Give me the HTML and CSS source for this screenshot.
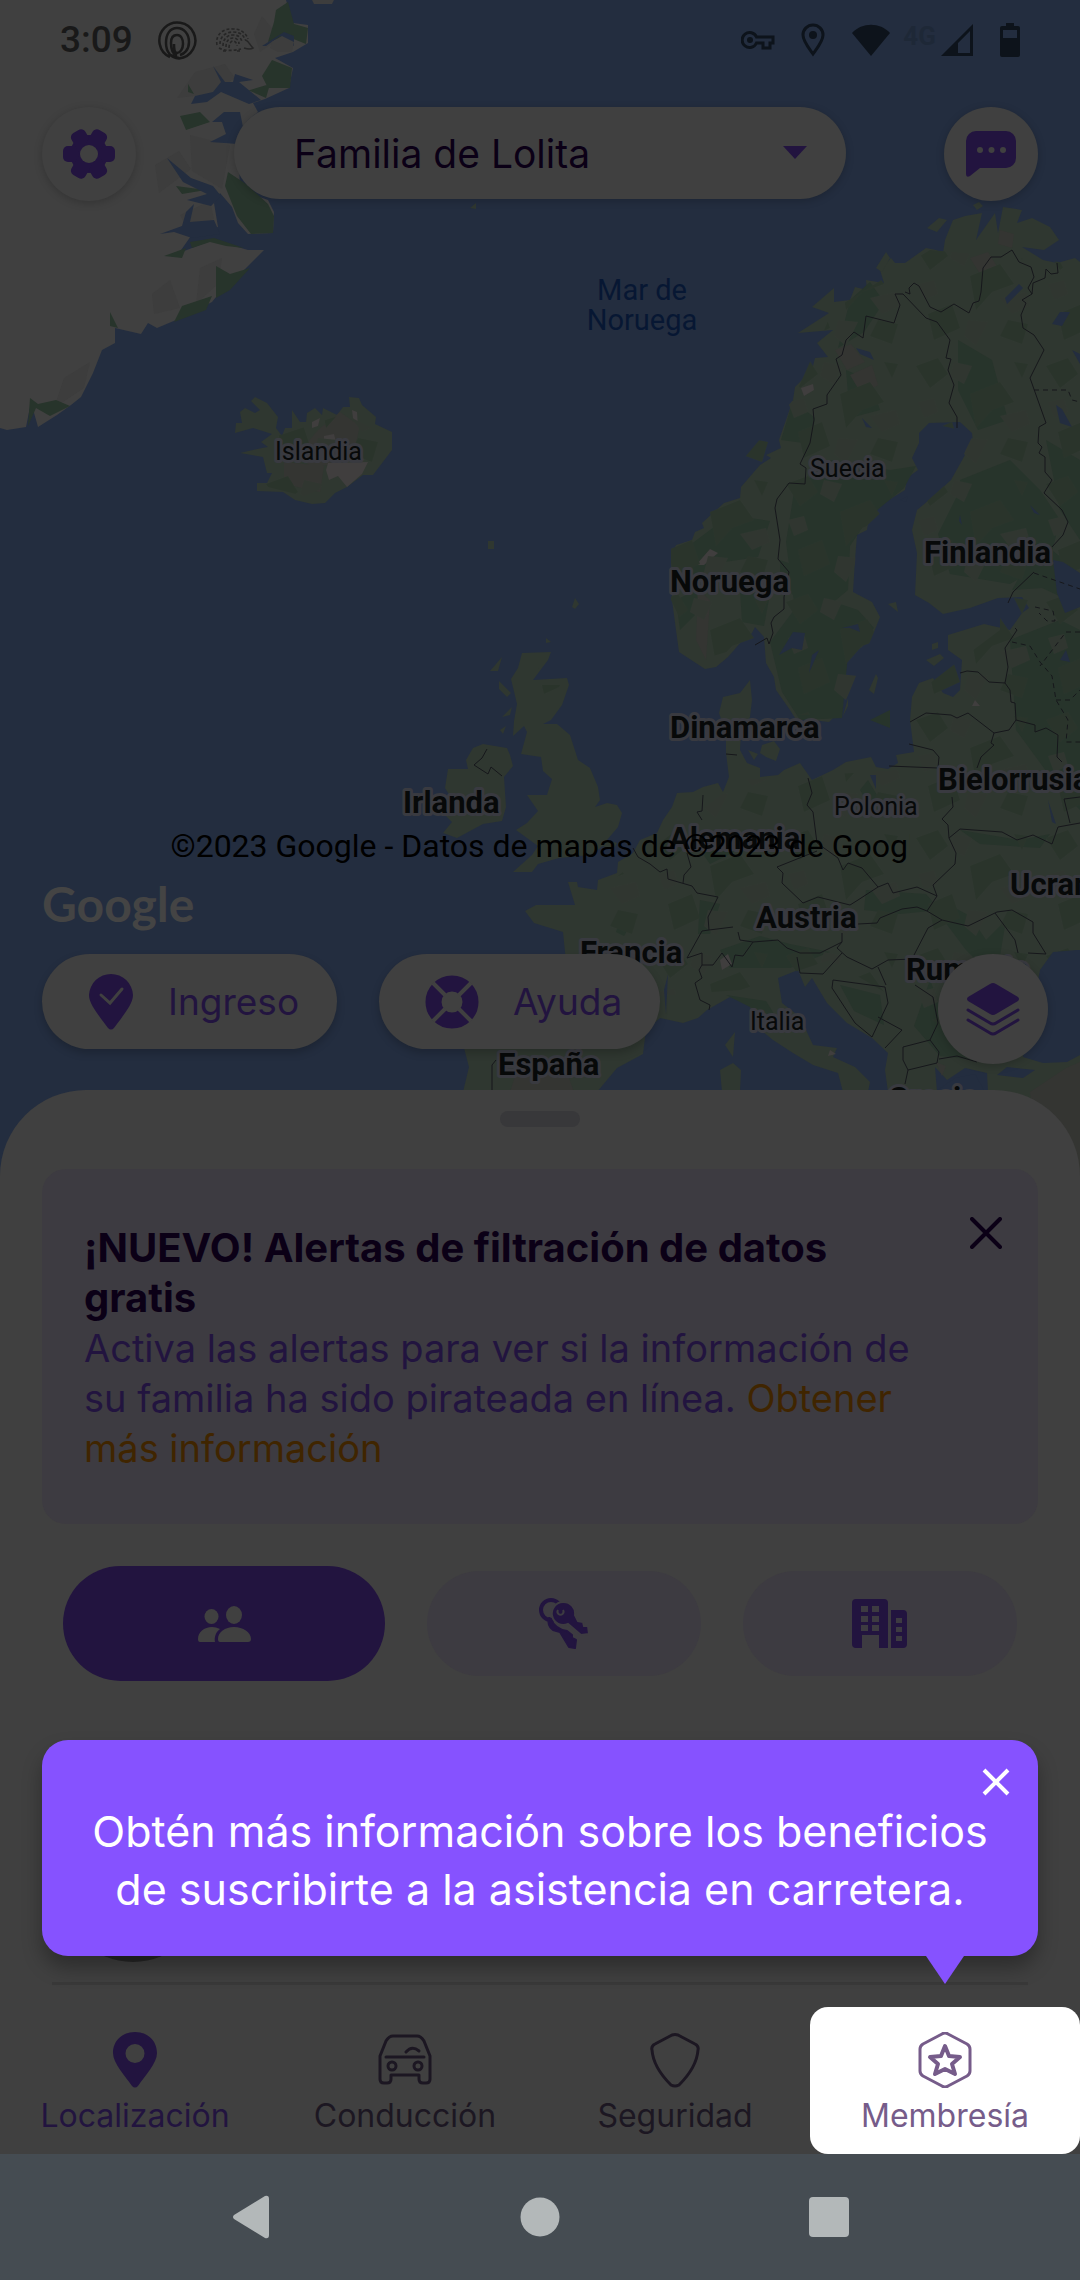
FILE: index.html
```html
<!DOCTYPE html>
<html lang="es">
<head>
<meta charset="utf-8">
<meta name="viewport" content="width=device-width, initial-scale=1">
<title>Familia de Lolita</title>
<link rel="stylesheet" href="styles.css">
</head>
<body>
<div class="screen">
  <main class="map">
    <svg class="map-canvas" viewBox="0 0 1080 1180" preserveAspectRatio="xMidYMin slice" aria-hidden="true">
      <defs>
        <pattern id="relief" width="130" height="118" patternUnits="userSpaceOnUse">
          <path class="relief-dark" d="M6 12l22-8 10 16-18 14zM60 40l30-12 14 20-22 8-16 18zM18 78l24-10 8 24-26 12zM98 84l20 4-6 20-22-8zM104 8l14 2-6 14z"/>
          <path class="relief-light" d="M44 8l18 4-8 18-14-8zM90 62l26-6 4 14-18 8zM58 84l20 2-12 24-12-10zM8 48l16-4 4 14-14 6z"/>
        </pattern>
      </defs>
      <rect class="sea" width="1080" height="1180"/>

      <!-- Greenland -->
      <path class="ice" d="M0 0H286L293 23 308 25 308 43 293 52 275 58 293 68 289 88 265 99 253 103 258 112 248 120 238 133 240 190 268 200 274 212 273 233 248 234 238 223 232 207 220 193 214 203 218 227 193 233 179 253 213 240 248 250 264 250 241 273 224 287 212 302 176 320 157 328 148 323 141 334 115 328 115 343 102 350 93 373 81 397 71 405 57 415 38 427 31 402 26 427 7 430 0 428Z"/>
      <path class="ice-shade" d="M262 16l18 22-20 14-6-18zM195 72l30-8 10 14-24 16-34 4zM155 165l24-14 12 18-32 24zM190 135l40 10-8 44-30-18zM152 294l18-14 10 28-26 6zM200 268l22-10-4 26-22 20zM64 378l26-16-6 26-30 20zM180 215l30-14 4 18-28 8z"/>
      <path class="woods" d="M276 10l12-8 6 22 14 4-2 16-20-8-18 6 6-20zM272 60l20 8-2 20-22 0-6-12zM228 172l18 12 22 20 6 12-1 17-22 1-14-18-12-30zM216 266l14 8 20-6-20 22-14 8zM182 306l30-10-6 14-32 12zM110 312l8 16-8-2zM190 242l24-4 30 10-18-2-16-4-18 6zM30 398l8 6 18-4 14 6-20 10-14-8-8 18zM180 116l20-4 10 10-24 8zM164 256l22-8-4 10zM188 84l6 10-6-2zM176 186l30 4-24 4zM250 90l20-6-4 14-18-8z"/>
      <path class="sea" d="M213 66l12 16 8 0 2-8 18 6-14 2 22 18-12 4-28-12-14 10-16 2 4-8 18-4 8-10zM167 158l24 20 22 8 8 10-10 10-24-6 20-6-24-12zM224 112l16 0 4 20-6 12-28-2 16-8-4-12-10 0zM262 46l22-14 10 4 0 10-14-10-14 10zM160 234l22-8 4-14 8-8-4 18 24-2 6 14-28 4-18-6z"/>
      <path class="ice-shade" d="M272 42l10-6 12 6-2 10-14 0-8-4zM312 0h22l-2 4-18 0z"/>

      <!-- Iceland -->
      <path class="land" d="M255 397L267 403 278 417 276 428 282 436 285 428 292 428 292 410 300 422 306 422 307 413 315 408 322 415 323 408 337 415 343 407 350 407 349 397 359 398 362 405 376 417 375 424 392 432 392 450 373 475 363 475 347 487 335 493 325 503 312 504 295 500 283 492 257 491 257 483 267 483 272 473 267 473 263 457 240 453 262 448 268 447 261 442 272 434 253 428 235 433 236 423 242 423 240 412 245 408 255 413 260 410 251 401Z"/>
      <path class="soil" d="M340 412l20 14-8 34-40 8-14-14 20-24zM284 462l40 4-4 26-36-8z"/>
      <path class="snow" d="M328 463l40-1-6 12-15 13-9-11-9 4-3-10zM312 422l8-4-2 8-6 2zM352 410l5 2 1 14-5-8zM324 436l10-2 2 8-12 0z"/>

      <!-- British Isles -->
      <path class="land" d="M522 653L551 652 548 660 533 680 567 678 569 685 562 705 551 720 543 724 557 724 570 735 578 760 590 768 598 787 600 800 595 807 607 803 617 805 622 813 618 827 607 840 617 843 613 850 603 846 590 855 559 858 538 864 532 872 513 872 532 855 538 846 516 830 527 823 538 811 527 795 547 795 552 779 543 771 541 757 521 754 527 732 524 726 513 736 514 721 517 704 511 679 518 668Z"/>
      <path class="land" d="M483 744L507 748 510 755 513 766 504 777 506 807 502 821 483 824 457 838 443 833 452 822 446 816 457 807 445 788 448 769 468 769 466 760 473 748ZM490 671l12-14-4 14zM499 681l12 12-4 4-8-8zM502 717l10-10-2 8zM500 730l6-4-3 8zM488 541h6v8h-6zM575 598l4 6-4 5-3-2zM546 638l5 4-5 1zM470 208l6-5v6z"/>

      <!-- Mainland Europe -->
      <path class="land" id="mainland" d="M705 669L679 652 676 630 672 600 671 557 676 545 692 540 695 532 704 528 702 523 724 503 740 498 741 487 760 465 771 458 766 455 781 448 779 440 793 400 795 387 812 370 815 358 828 357 817 343 833 330 798 333 829 313 812 307 834 288 834 302 850 300 855 287 867 290 866 280 884 283 880 270 891 258 895 263 905 263 919 253 926 248 936 250 943 253 945 240 953 220 965 216 982 213 976 240 995 213 998 233 1003 207 1022 210 1017 223 1032 218 1050 227 1059 240 1044 250 1022 247 1043 260 1057 263 1075 258 1080 262V1180H988L988 1092 987 1073 965 1068 947 1080 935 1067 937 1092 888 1092 885 1070 888 1053 872 1038 847 1023 827 1003 812 978 805 987 798 970 778 978 782 1003 800 1017 813 1045 837 1048 833 1057 855 1067 870 1082 868 1092 843 1092 838 1073 813 1065 793 1053 773 1040 752 1023 750 1005 730 997 707 1010 698 1018 683 1023 660 1018 646 1030 643 1054 617 1068 597 1092H463L469 1067 464 1048 470 1035 560 1030 570 1000 565 952 563 932 534 923 525 911 536 905 575 905 568 882 577 882 578 887 597 890 598 880 617 873 618 862 633 853 640 840 657 833 663 820 672 807 677 793 693 792 703 787 718 783 723 792 729 777 726 753 726 733 719 713 723 697 740 693 750 680 752 700 750 717 741 733 740 750 747 763 760 768 760 777 778 775 784 770 800 763 812 780 833 770 846 762 871 757 876 767 888 769 898 763 896 755 914 752 910 720 912 697 919 683 933 678 943 693 953 697 960 690 962 660 948 650 948 635 984 624 1010 630 1022 613 1029 608 1022 597 998 598 970 608 943 614 929 603 915 595 917 553 912 530 917 510 929 500 951 480 965 455 974 453 972 433 960 422 929 423 919 433 919 443 912 458 918 470 907 478 905 490 884 503 869 518 867 530 857 535 855 560 853 592 872 602 880 617 874 632 862 647 848 655 845 677 841 710 829 722 795 718 790 710 776 690 774 677 766 663 764 637 755 627 752 633 741 642 728 657 716 667Z"/>
      <path class="land" d="M762 745l12-4 6 8-4 12-10-4-6-4zM748 750l10 4-4 6zM869 690l7-16 2 4-4 16zM843 716l5-18 0 8zM926 660l14-6 4 4-10 8zM932 644l6-2v6l-6 2zM888 604l8-2 2 10zM735 1032l-2 25-8-12zM720 1070l13-7 8 7-1 22h-18zM927 228l12-10 8 2-10 12zM973 205l6-3 4 4-6 4zM876 268l10-16 4 6-8 14z"/>
      <g class="woods">
        <path d="M793 400l22 18-4 26-30-4zM830 460l60 10 26-4-12 22-34 28-20 30-2 44-24 20-30-8-8-60 8-50zM780 560l28 10 20 30 30 10 16 18-26 26-6 64-42 2-18-28-12-50 30-40-20-20zM960 480l50-20 30 30 20 30-10 40-40 24-60-10-12-40 12-24 10-20zM850 300l20-18 14 20-20 30-26 16zM846 370l24 10 10 30-30 8zM958 340l34 20 16 60-30 10-20-40zM690 545l40-30 40 6-12 36-40 6-36 24zM676 600l20-10 4 20-20 20zM740 590l30 4-6 32-22-4z"/>
        <path d="M1040 540l24 20 4 40-26-12-30 2zM1046 440l34 20v80l-20-30zM1010 640l50-20 20 10v180l-20-20-44-60-4-60zM960 830l60 10 30-6-10 14-60-4zM866 890l60 4 14 16-40 4-36-4zM940 900l30 16 16 24 20-20-10 60-30-30-30-40zM720 950l40-14 30 8 40 8-40 16-60 0zM840 985l40 10 4 30-30-14zM930 980l20 50 50 20 0 12-60-6-26-30zM868 780l12 20-8 10-12-20zM700 900l20 4-10 30-12 0zM726 995l40 6 10 16-22-8zM700 850l40-14 10 8-40 20zM620 920l10 6-6 10-8-4zM870 720l20-10 0 18z"/>
      </g>
      <g class="soil">
        <path d="M835 350l16-6 14 18-18 8zM850 375l22-10 6 20-16 10zM970 258l18-6 10 16-14 12zM1000 230l14 4-2 14-14-4zM698 590l12 10-4 60-10-20z"/>
        <path d="M1066 1068l14-6v118l-46-60-4-28zM520 1060l44 4 10 28h-64zM936 1062l10 4-4 10z"/>
      </g>
      <path class="snow" d="M801 388l12-4 1 6-10 6zM696 565l14-16 8 4-14 12zM720 960l8-6 4 10-10 6zM830 1050l6 4-8 2zM975 700l5 6-8 0z"/>
      <path fill="url(#relief)" d="M671 600V545L793 400 833 310 930 250 1060 262 1080 300V1060L1000 1060 830 960 740 990 600 1000 600 890 740 780 900 770 914 752 912 697 960 660 1000 630 1000 600 917 590 917 510 951 480 974 433 929 423 905 490 857 535 853 592 874 632 840 715 795 715 766 640 700 660Z"/>
      <path fill="url(#relief)" d="M262 440l22-6 60-20 40 20 0 20-40 26-40 16-40-10zM520 665l20 0-10 20 30 0-10 24-30 10-4-30z"/>

      <!-- Lakes and inland seas -->
      <path class="sea" d="M793 632l12 1-3 17-10-2-13 7zM819 650l-10 23 3-18zM842 628l16-4 2 8-10-4zM1053 560l10 2 17 11v34l-15 6-8-20zM1005 298l14-14 4 4-16 16zM1052 324l8-12 10 0-8 14zM856 348l14 4 4 8-14-6zM862 418l10 10-6-1zM1056 405l6 4 10 18-12-4zM1072 350l8 4v10zM1060 660l6-10 4 12zM1040 970L1053 952 1077 950 1080 950V1055L1067 1062 1043 1063 1023 1057ZM997 1075L1007 1067 1035 1070 1023 1078ZM1048 800l8 24-4-2zM870 775l6 0 0 14zM935 1092h50l-10-18-20 4zM668 974l-2 40-2-24zM900 500l8-4-2 6zM1030 505l10 10-6-2zM960 515l2 10-3-4z"/>

      <g class="border">
        <path d="M755 645L767 638 769 644 773 633 771 623 774 617 784 609 784 597 789 572 778 559 780 540 775 508 777 499 789 483 805 484 806 468 800 464 810 443 814 420 813 409 827 404 827 395 841 375 836 359 842 355 846 340 854 332 863 338 866 316 894 323 900 305 895 294 903 294 926 318 937 322 950 340 946 358 951 359 948 370 954 385 949 403 957 417 957 428"/>
        <path d="M905 292L910 294 909 288 914 283 919 286 930 307 941 312 954 304 969 313 973 303 979 301 981 292 983 268 991 257 1001 257 1012 250 1019 262 1031 267 1034 277 1028 288 1032 294 1022 300 1026 303 1021 315 1023 328 1034 335 1044 350 1030 378 1046 423 1039 427 1038 443 1042 447 1039 453 1045 457 1045 472 1052 480 1044 493 1062 510 1068 522 1063 535 1052 547M1034 572L1013 592 1008 603M1032 294L1033 283 1045 278 1046 269 1051 274 1058 273 1057 263"/>
        <path d="M1015 628L1017 630 1005 648 1008 667 1005 683 1010 690 1011 702 1015 703 1016 720 1035 725 1035 732 1046 728 1058 735 1057 757 1062 762M960 673L967 671 978 672 989 682 1005 683M910 722L926 713 951 715 957 718 968 713 994 733 1009 730 1016 720M994 733L991 743 994 745 981 757 977 768M909 744L933 750 939 757 938 768 889 766M726 754l11 1"/>
        <path d="M703 795L702 811 697 812 702 820M633 848L638 857 650 864 660 872 667 869 668 879 692 886 697 893 718 897 708 917 709 930 702 931 687 958 702 953 702 965 713 965 722 953 732 967 735 955 743 956 753 942 740 940 738 932M687 853L691 867 684 875 683 883M709 930L733 927M753 942L778 940 787 948 800 953 820 953 842 942 842 933M702 965L699 970 702 978 695 983 700 1000 710 1005 709 1010"/>
        <path d="M808 778L812 793 807 805 813 812 817 843 838 858 843 870 848 863 862 868 878 887 888 883 893 893 917 887 937 896 927 911M777 867L817 851M777 867L783 873 782 883 803 903 818 897 838 902 850 905 858 900 878 887M952 797L953 807 942 819 948 825 949 838 956 853 955 864 933 885 937 896M949 838L960 829 1002 832 1017 840 1033 835 1052 844 1058 827 1080 823M1080 797l-16 2 6 24"/>
        <path d="M858 924L877 923 880 918 902 909 917 907 927 911 942 920 928 928 913 957M942 920L968 926 997 912 1012 910 1033 922 1033 933 1046 954 1028 953M995 913L1015 940 1018 953M842 942L837 948 847 957 872 969 888 960 913 959M797 957L800 973 823 974 842 953M833 980L885 987 888 1003 872 1037 855 1023 832 988ZM878 967L886 985M878 1017L902 1030 885 1048M903 1047L930 1040 939 1052 937 1063 908 1070 903 1060ZM915 985L933 997 938 1023 930 1040M939 1059L957 1056 977 1062M908 1070L905 1084M487 749L482 758 474 765 488 774 491 767 502 776M492 1092L492 1065 496 1060"/>
        <path class="disputed" d="M1034 390h34l4 10 8 2M1034 573l46 16M1035 607l18 4 2 10-8 0-8-8M1012 642l18 4 10 16 12 14 4 24 12 20-2 22 14 0M1080 632l-14 0-26 34M1056 700l14 0 10-10"/>
      </g>

      <g class="country">
        <text x="924" y="563">Finlandia</text>
        <text x="670" y="592">Noruega</text>
        <text x="670" y="738">Dinamarca</text>
        <text x="938" y="790">Bielorrusia</text>
        <text x="403" y="813">Irlanda</text>
        <text x="669" y="849">Alemania</text>
        <text x="1010" y="895">Ucrania</text>
        <text x="756" y="928">Austria</text>
        <text x="580" y="963">Francia</text>
        <text x="906" y="980">Rumania</text>
        <text x="498" y="1075">España</text>
        <text x="888" y="1109">Grecia</text>
      </g>
      <g class="country minor">
        <text x="275" y="460">Islandia</text>
        <text x="810" y="477">Suecia</text>
        <text x="834" y="815">Polonia</text>
        <text x="750" y="1030">Italia</text>
      </g>
      <g class="sea-name">
        <text x="642" y="300">Mar de</text>
        <text x="642" y="330">Noruega</text>
      </g>
    </svg>

    <div class="status-bar">
      <div class="status-group">
        <time class="clock">3:09</time>
        <svg width="40" height="40" viewBox="0 0 40 40" fill="none" stroke="#191919" stroke-width="2.500"><path d="M13 37A18 18 0 1 1 22 38.500C14 38 9 32 9 23 9 14 13 8 20 8s12 6 12 14-5 12-9 13M14 35A18 18 0 0 0 22 38"/><path d="M20 36c-5-2-6-7-6-13 0-5 2-8 6-8s6 4 6 9-3 9-6 9-3-5-3-9"/></svg>
        <svg width="40" height="26" viewBox="0 0 40 26" fill="none" stroke="#262626" stroke-width="1.600"><path stroke-dasharray="3 2" d="M2 18C0 8 8 1 18 2c8 0 13 4 15 10M5 17C5 10 10 5 18 5s11 4 12 8M8 19c0-7 4-11 10-11s8 3 9 7M11 20c0-6 3-9 7-9s6 3 6 6M14 21c0-4 2-7 4-7s4 2 4 5M4 21c6 3 14 3 22 1M8 24h4M22 24h4"/><path d="M30 13c3 0 4 4 8 8-3 2-6 1-9 0"/></svg>
      </div>
      <div class="status-group status-right">
        <svg width="34" height="22" viewBox="0 0 34 22" fill="none" stroke="#0d131b" stroke-width="3"><path d="M15.500 8H32v6h-3v5h-7v-5h-6.500A7.500 7.500 0 1 1 15.500 8Z"/><circle cx="9" cy="11" r="1.500"/></svg>
        <svg width="24" height="34" viewBox="0 0 24 34"><path fill="none" stroke="#0d131b" stroke-width="3" d="M12 31C7 24 2 18 2 12a10 10 0 0 1 20 0c0 6-5 12-10 19Z"/><circle cx="12" cy="12" r="4" fill="#0d131b"/></svg>
        <svg width="40" height="34" viewBox="0 0 40 34"><path fill="#0d131b" d="M20 33L1 10C11-1 29-1 39 10Z"/></svg>
        <div class="signal">
          <span class="network">4G</span>
          <svg width="34" height="34" viewBox="0 0 34 34"><path fill="#0d131b" fill-rule="evenodd" d="M1 33L33 1V33ZM18 20V30H30V8Z"/></svg>
        </div>
        <svg width="20" height="34" viewBox="0 0 20 34"><path fill="#0d131b" fill-rule="evenodd" d="M6 0h8v3h4a2 2 0 0 1 2 2v27a2 2 0 0 1-2 2H2a2 2 0 0 1-2-2V5a2 2 0 0 1 2-2h4ZM3 7v8h14V7Z"/></svg>
      </div>
    </div>

    <header class="top-bar">
      <button class="round" aria-label="Ajustes">
        <svg width="52" height="52" viewBox="-26 -26 52 52" fill="#22143f"><circle r="19"/><rect x="-26" y="-8" width="52" height="16" rx="5"/><rect x="-26" y="-8" width="52" height="16" rx="5" transform="rotate(60)"/><rect x="-26" y="-8" width="52" height="16" rx="5" transform="rotate(120)"/><circle r="9" fill="#404040"/></svg>
      </button>
      <div class="circle-picker">
        <select class="picker-select" aria-label="Círculo"><option>Familia de Lolita</option></select>
        <svg class="picker-caret" width="24" height="14" viewBox="0 0 24 14"><path fill="#22143f" d="M0 0H24L12 13Z"/></svg>
      </div>
      <button class="round" aria-label="Mensajes">
        <svg width="52" height="48" viewBox="0 0 52 48"><path fill="#22143f" d="M11 1H41A10 10 0 0 1 51 11V28A10 10 0 0 1 41 38H15L5 46Q1 48 1 44V11A10 10 0 0 1 11 1Z"/><g fill="#404040"><circle cx="15" cy="20" r="3"/><circle cx="26.500" cy="20" r="3"/><circle cx="38" cy="20" r="3"/></g></svg>
      </button>
    </header>

    <div class="map-footer">
      <p class="attribution">©2023 Google - Datos de mapas de ©2023 de Google</p>
      <p class="google">Google</p>
      <div class="map-actions">
        <button class="pill">
          <svg width="46" height="56" viewBox="0 0 46 56"><path fill="#22143f" d="M23 0A22 22 0 0 1 45 21C45 31 33 44 26 54Q23 57 20 54C13 44 1 31 1 21A22 22 0 0 1 23 0Z"/><path fill="none" stroke="#404040" stroke-width="3" stroke-linecap="round" d="M13 21l9 8 12-14"/></svg>
          Ingreso
        </button>
        <button class="pill">
          <svg width="54" height="54" viewBox="-27 -27 54 54"><circle r="18.500" fill="none" stroke="#22143f" stroke-width="16"/><path stroke="#404040" stroke-width="4" d="M-19-19L-7-7M19-19L7-7M-19 19L-7 7M19 19L7 7"/></svg>
          Ayuda
        </button>
        <button class="round layers" aria-label="Capas del mapa">
          <svg width="54" height="54" viewBox="0 0 54 54"><path fill="#22143f" d="M24 2Q27 0 30 2L52 15Q54 17 52 19L30 32Q27 34 24 32L2 19Q0 17 2 15Z"/><path fill="none" stroke="#22143f" stroke-width="3" stroke-linecap="round" stroke-linejoin="round" d="M2 28L24 41Q27 43 30 41L52 28M2 38L24 51Q27 53 30 51L52 38"/></svg>
        </button>
      </div>
    </div>
  </main>

  <section class="sheet">
    <div class="handle"></div>
    <article class="banner">
      <div class="banner-copy">
        <h2 class="banner-title">¡NUEVO! Alertas de filtración de datos gratis</h2>
        <p class="banner-text">Activa las alertas para ver si la información de su familia ha sido pirateada en línea. <a class="banner-link" href="#alertas">Obtener más información</a></p>
      </div>
      <button class="close" aria-label="Cerrar aviso">
        <svg width="32" height="32" viewBox="0 0 32 32"><path stroke="#0b0016" stroke-width="4" stroke-linecap="round" d="M2 2L30 30M30 2L2 30"/></svg>
      </button>
    </article>
    <div class="segments">
      <button class="segment active" aria-label="Personas">
        <svg width="54" height="36" viewBox="0 0 54 36" fill="#404040"><ellipse cx="14.500" cy="10.500" rx="7" ry="7.500"/><ellipse cx="37" cy="9" rx="8" ry="9"/><path d="M3 36Q1 36 1 33C1 26 7 21 15 21Q19 21 23 23C19 26 17 31 18 36ZM23 36Q21 36 21 33C21 26 28 21 37 21S54 26 54 33Q54 36 51 36Z"/></svg>
      </button>
      <button class="segment" aria-label="Objetos">
        <svg width="50" height="54" viewBox="0 0 50 54"><circle cx="12" cy="13" r="10" fill="none" stroke="#22143f" stroke-width="4"/><path fill="#22143f" stroke="#22143f" stroke-width="2" stroke-linejoin="round" d="M10 21Q8 29 14 33L21 35 30 50 36 51 37 43 33 41 33 38 28 34Q16 32 12 22Z"/><path fill="#22143f" stroke="#3d3b41" stroke-width="2" d="M24 5A11.500 11.500 0 1 0 29 27L42 38 50 37 49 29 45 29 44 25 39 24 36 18A11.500 11.500 0 0 0 24 5Z"/><path fill="none" stroke="#3d3b41" stroke-width="2" d="M19 13A3 3 0 1 0 24 13"/></svg>
      </button>
      <button class="segment" aria-label="Lugares">
        <svg width="56" height="50" viewBox="0 0 56 50" fill="#22143f" fill-rule="evenodd"><path d="M4 0H32Q36 0 36 4V49H27V36H10V49H4Q0 49 0 45V4Q0 0 4 0ZM9 7V13H16V7ZM20 7V13H27V7ZM9 17V23H16V17ZM20 17V23H27V17ZM9 26V32H16V26ZM20 26V32H27V26Z"/><path d="M39 11H51Q55 11 55 15V45Q55 49 51 49H39ZM44 19V24H50V19ZM44 28V33H50V28ZM44 37V42H50V37Z"/></svg>
      </button>
    </div>
    <div class="member">
      <div class="avatar"></div>
    </div>
  </section>

  <nav class="tabs">
    <div class="tooltip" role="dialog" aria-label="Membresía">
      <p class="tooltip-text">Obtén más información sobre los beneficios de suscribirte a la asistencia en carretera.</p>
      <button class="close tooltip-close" aria-label="Cerrar">
        <svg width="28" height="28" viewBox="0 0 28 28"><path stroke="#fff" stroke-width="4" d="M2 2L26 26M26 2L2 26"/></svg>
      </button>
    </div>
    <a class="tab current" href="#localizacion">
      <svg width="56" height="56" viewBox="0 0 56 56"><path fill="#22143f" fill-rule="evenodd" d="M28 0C41 0 50 9 50 21 50 31 38 44 31 54Q28 57 25 54C18 44 6 31 6 21 6 9 15 0 28 0ZM28 12A9 9 0 1 0 28 31 9 9 0 1 0 28 12Z"/></svg>
      Localización
    </a>
    <a class="tab" href="#conduccion">
      <svg width="56" height="56" viewBox="0 0 56 56" fill="none" stroke="#1c1722" stroke-width="3" stroke-linecap="round" stroke-linejoin="round"><path d="M3 24L9 9Q12 4 16 4H40Q44 4 47 9L53 24V47Q53 51 49 51H46Q42 51 42 47V43H14V47Q14 51 10 51H7Q3 51 3 47ZM9 25H47M29 20Q35 13 42 19"/><circle cx="15" cy="34" r="4"/><circle cx="41" cy="34" r="4"/></svg>
      Conducción
    </a>
    <a class="tab" href="#seguridad">
      <svg width="56" height="56" viewBox="0 0 56 56" fill="none" stroke="#1c1722" stroke-width="3" stroke-linejoin="round"><path d="M25 3Q28 2 31 3L48 12Q52 14 51 18C50 32 41 44 32 53Q28 55 24 53C15 44 6 32 5 18Q4 14 8 12Z"/></svg>
      Seguridad
    </a>
    <a class="tab highlighted" href="#membresia">
      <svg width="56" height="56" viewBox="0 0 56 56" fill="none" stroke="#765c8a" stroke-width="3" stroke-linejoin="round"><path d="M25 2Q28 0 31 2L50 12Q53 14 53 17V39Q53 42 50 44L31 54Q28 56 25 54L6 44Q3 42 3 39V17Q3 14 6 12Z"/><path stroke-width="4" d="M28 14L32 24 43 25 35 32 38 42 28 37 18 42 21 32 13 25 24 24Z"/></svg>
      Membresía
    </a>
  </nav>

  <footer class="system-nav">
    <button class="system-button" aria-label="Atrás"><svg width="38" height="44" viewBox="0 0 38 44"><path fill="#b3b8b9" d="M2 20L33 1Q37 0 37 4V40Q37 44 33 43L2 24Q0 22 2 20Z"/></svg></button>
    <button class="system-button" aria-label="Inicio"><svg width="40" height="40" viewBox="0 0 40 40"><circle cx="20" cy="20" r="19.500" fill="#b3b8b9"/></svg></button>
    <button class="system-button" aria-label="Recientes"><svg width="40" height="40" viewBox="0 0 40 40"><rect width="40" height="40" rx="4" fill="#b3b8b9"/></svg></button>
  </footer>
</div>
</body>
</html>
```
FILE: styles.css
```css
* { box-sizing: border-box; }

body {
  margin: 0;
  background: #404040;
  font-family: Inter, "Liberation Sans", sans-serif;
}

h2, p { margin: 0; }
svg { display: block; flex: none; }
a { color: inherit; text-decoration: none; }

button {
  padding: 0;
  border: 0;
  background: none;
  font: inherit;
  color: inherit;
}

.screen {
  display: flex;
  flex-direction: column;
  min-height: 100vh;
}

/* Map */
.map {
  position: relative;
  flex: 1;
  display: flex;
  flex-direction: column;
  min-height: 900px;
  padding-bottom: 112px;
  overflow: hidden;
}

.map-canvas {
  position: absolute;
  inset: 0;
  width: 100%;
  height: 100%;
}

.sea { fill: #232d3f; }
.ice { fill: #404040; }
.ice-shade { fill: #3d3d3d; }
.land { fill: #2f3730; }
.woods { fill: #27342b; }
.soil { fill: #343532; }
.snow { fill: #403e3e; }
.relief-dark { fill: #2a342b; }
.relief-light { fill: #303630; }
.border { fill: none; stroke: #16171b; stroke-width: 1; }
.disputed { stroke-dasharray: 5 4; }

.country {
  fill: #070909;
  stroke: #393a40;
  stroke-width: 6px;
  stroke-linejoin: round;
  paint-order: stroke;
  font: 700 31px Roboto, sans-serif;
}
.minor { font-size: 25px; font-weight: 400; }

.sea-name {
  fill: #071733;
  text-anchor: middle;
  font: 400 29px Roboto, sans-serif;
}

/* Status bar */
.status-bar {
  position: relative;
  display: flex;
  justify-content: space-between;
  height: 80px;
  padding: 0 60px;
}
.status-group { display: flex; align-items: center; gap: 18px; }
.status-right { gap: 26px; }
.clock {
  margin-right: 6px;
  color: #191919;
  font: 500 37px/44px Roboto, sans-serif;
}
.signal { display: flex; gap: 4px; margin-left: -14px; }
.network {
  color: #1e2837;
  font: 700 26px/26px Roboto, sans-serif;
}

/* Circle picker row */
.top-bar {
  position: relative;
  display: flex;
  justify-content: space-between;
  margin-top: 27px;
  padding: 0 42px;
}

.round {
  display: grid;
  place-items: center;
  width: 94px;
  height: 94px;
  border-radius: 50%;
  background: #404040;
  box-shadow: 0 2px 8px rgba(0, 0, 0, .2);
}

.circle-picker {
  display: grid;
  flex: 1;
  align-items: center;
  height: 92px;
  max-width: 612px;
  border-radius: 46px;
  background: #404040;
  box-shadow: 0 2px 8px rgba(0, 0, 0, .2);
}
.picker-select {
  grid-area: 1 / 1;
  width: 100%;
  height: 100%;
  padding: 0 80px 0 60px;
  border: 0;
  border-radius: inherit;
  appearance: none;
  background: none;
  color: #0b0016;
  font: 400 39px Inter, sans-serif;
}
.picker-caret {
  grid-area: 1 / 1;
  justify-self: end;
  margin-right: 39px;
  pointer-events: none;
}

/* Map footer */
.map-footer { position: relative; margin-top: auto; }

.attribution {
  max-width: 739px;
  margin: 0 auto;
  overflow: hidden;
  color: #000;
  font: 400 32px/40px Roboto, sans-serif;
  white-space: nowrap;
}
.google {
  margin-top: 8px;
  padding-left: 42px;
  color: #444;
  font: 700 48px/60px Lato, sans-serif;
}
.map-actions {
  display: flex;
  align-items: flex-start;
  gap: 42px;
  margin-top: 20px;
  padding: 0 32px 0 42px;
}
.pill {
  display: flex;
  align-items: center;
  gap: 34px;
  height: 95px;
  padding: 0 38px 0 46px;
  border-radius: 48px;
  background: #404040;
  box-shadow: 0 4px 8px rgba(0, 0, 0, .2);
  color: #22143f;
  font-size: 37px;
}
.layers { width: 110px; height: 110px; margin-left: auto; }

/* Bottom sheet */
.sheet {
  position: relative;
  margin-top: -86px;
  padding: 21px 42px 22px;
  border-radius: 86px 86px 0 0;
  background: #404040;
}
.handle {
  width: 80px;
  height: 16px;
  margin: 0 auto 42px;
  border-radius: 8px;
  background: #38383a;
}
.banner {
  display: flex;
  align-items: flex-start;
  gap: 38px;
  padding: 48px 36px 51px 42px;
  border-radius: 24px;
  background: #3d3b41;
}
.banner-copy {
  flex: 1;
  padding-top: 6px;
  font-size: 38px;
  line-height: 50px;
}
.banner-title { color: #0b0016; font-size: 40px; font-weight: 700; }
.banner-text { color: #22143f; }
.banner-link { color: #402500; }

.segments {
  display: grid;
  grid-template-columns: 322fr 274fr 274fr;
  align-items: center;
  gap: 42px;
  margin-top: 42px;
  padding: 0 21px;
}
.segment {
  display: grid;
  place-items: center;
  height: 105px;
  border-radius: 53px;
  background: #3d3b41;
}
.segment.active {
  height: 115px;
  border-radius: 58px;
  background: #22143f;
}

.member {
  margin: 133px 10px 0;
  padding: 0 7px 20px;
  border-bottom: 3px solid #393939;
}
.avatar {
  width: 148px;
  height: 148px;
  border-radius: 50%;
  background: #262626;
}

/* Tab bar */
.tabs {
  position: relative;
  display: grid;
  grid-template-columns: repeat(4, 1fr);
}
.tab {
  display: flex;
  flex-direction: column;
  align-items: center;
  gap: 6px;
  padding: 25px 0 16px;
  color: #1c1722;
  font-size: 32px;
  line-height: 44px;
}
.current { color: #22143f; }
.highlighted {
  border-radius: 18px;
  background: #fff;
  color: #765c8a;
}

.tooltip {
  position: absolute;
  right: 42px;
  bottom: calc(100% + 51px);
  left: 42px;
  padding: 62px 48px 38px;
  border-radius: 26px;
  background: #8652ff;
  box-shadow: 0 12px 20px rgba(0, 0, 0, .3);
  color: #fff;
}
.tooltip::after {
  content: "";
  position: absolute;
  top: 100%;
  right: 74px;
  border: solid transparent;
  border-width: 28px 19px 0;
  border-top-color: #8652ff;
}
.tooltip-text {
  font-size: 43px;
  line-height: 58px;
  text-align: center;
}
.tooltip-close { position: absolute; top: 28px; right: 28px; }

/* System navigation */
.system-nav {
  display: grid;
  grid-template-columns: repeat(3, 1fr);
  height: 126px;
  padding: 0 106px;
  background: #454c52;
}
.system-button { display: grid; place-items: center; }
```
